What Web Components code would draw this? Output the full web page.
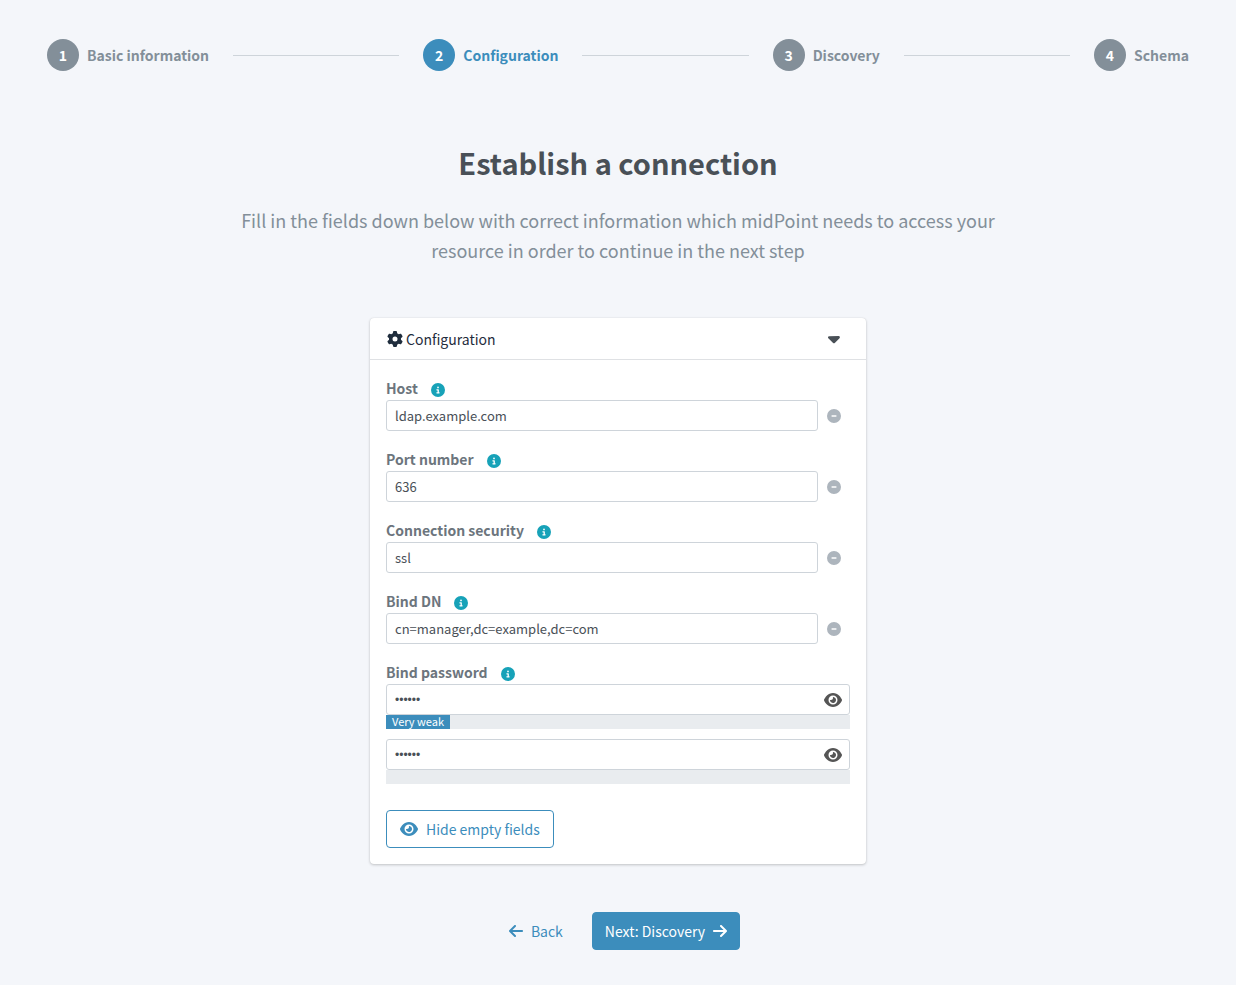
<!DOCTYPE html>
<html lang="en">
<head>
<meta charset="utf-8">
<meta name="viewport" content="width=device-width, initial-scale=1">
<title>Establish a connection</title>
<style>
  html { background: #f4f6fa; }
  body {
    margin: 0;
    font: 14px/24px "Noto Sans CJK SC", "Noto Sans CJK JP", "Noto Sans", sans-serif;
    color: #495057;
    --primary: #3c8dbc;
    --muted: #838f99;
    --line: #ced4da;
  }
</style>
</head>
<body>
<resource-wizard></resource-wizard>

<script>
const ICONS = {
  cog: ['0 0 512 512', 'M495.9 166.6c3.2 8.7 .5 18.4-6.4 24.6l-43.3 39.4c1.1 8.3 1.7 16.8 1.7 25.4s-.6 17.1-1.7 25.4l43.3 39.4c6.9 6.2 9.6 15.9 6.4 24.6c-4.4 11.9-9.7 23.3-15.8 34.3l-4.7 8.1c-6.6 11-14 21.4-22.1 31.2c-5.9 7.2-15.7 9.600-24.500 6.800l-55.700-17.700c-13.400 10.300-28.200 18.900-44 25.400l-12.500 57.100c-2 9.100-9 16.300-18.200 17.800c-13.800 2.300-28 3.500-42.500 3.500s-28.700-1.200-42.500-3.500c-9.200-1.500-16.200-8.700-18.200-17.800l-12.500-57.100c-15.800-6.500-30.600-15.100-44-25.400L83.100 425.900c-8.800 2.800-18.600 .3-24.500-6.800c-8.100-9.800-15.500-20.200-22.100-31.200l-4.700-8.100c-6.100-11-11.400-22.400-15.800-34.300c-3.200-8.700-.5-18.400 6.400-24.600l43.300-39.400C64.600 273.100 64 264.600 64 256s.6-17.100 1.700-25.400L22.400 191.200c-6.900-6.200-9.600-15.900-6.400-24.600c4.400-11.900 9.700-23.300 15.800-34.300l4.700-8.100c6.600-11 14-21.400 22.100-31.200c5.900-7.200 15.700-9.600 24.500-6.800l55.700 17.700c13.400-10.300 28.200-18.900 44-25.400l12.500-57.100c2-9.100 9-16.300 18.200-17.800C227.300 1.200 241.500 0 256 0s28.700 1.200 42.500 3.500c9.200 1.500 16.200 8.700 18.200 17.800l12.500 57.100c15.800 6.500 30.600 15.100 44 25.400l55.700-17.700c8.800-2.800 18.600-.3 24.500 6.800c8.100 9.800 15.500 20.200 22.100 31.200l4.700 8.100c6.100 11 11.400 22.400 15.800 34.300zM256 336a80 80 0 1 0 0-160 80 80 0 1 0 0 160z'],
  info: ['0 0 512 512', 'M256 512A256 256 0 1 0 256 0a256 256 0 1 0 0 512zM216 336h24V272H216c-13.300 0-24-10.700-24-24s10.700-24 24-24h48c13.300 0 24 10.700 24 24v88h8c13.300 0 24 10.700 24 24s-10.700 24-24 24H216c-13.300 0-24-10.700-24-24s10.700-24 24-24zm40-208a32 32 0 1 1 0 64 32 32 0 1 1 0-64z'],
  minus: ['0 0 512 512', 'M256 512A256 256 0 1 0 256 0a256 256 0 1 0 0 512zM184 232H328c13.300 0 24 10.700 24 24s-10.700 24-24 24H184c-13.300 0-24-10.700-24-24s10.700-24 24-24z'],
  eye: ['0 0 576 512', 'M288 32c-80.800 0-145.500 36.800-192.600 80.600C48.600 156 17.300 208 2.500 243.700c-3.300 7.900-3.300 16.700 0 24.600C17.300 304 48.600 356 95.400 399.400C142.500 443.200 207.200 480 288 480s145.500-36.800 192.600-80.600c46.800-43.500 78.100-95.400 93-131.100c3.300-7.900 3.300-16.700 0-24.600c-14.900-35.700-46.200-87.700-93-131.100C433.500 68.800 368.800 32 288 32zM144 256a144 144 0 1 1 288 0 144 144 0 1 1 -288 0zm144-64c0 35.300-28.700 64-64 64c-7.100 0-13.900-1.200-20.300-3.300c-5.500-1.800-11.900 1.600-11.700 7.400c.3 6.900 1.300 13.800 3.200 20.700c13.700 51.200 66.400 81.600 117.600 67.900s81.600-66.400 67.900-117.600c-11.100-41.500-47.800-69.400-88.600-71.100c-5.800-.2-9.200 6.100-7.400 11.700c2.100 6.400 3.300 13.200 3.300 20.300z'],
  caret: ['0 0 320 512', 'M137.4 374.6c12.5 12.5 32.800 12.5 45.300 0l128-128c9.200-9.200 11.900-22.900 6.900-34.900s-16.600-19.800-29.600-19.800L32 192c-12.900 0-24.600 7.800-29.600 19.800s-2.200 25.700 6.900 34.900l128 128z'],
  left: ['0 0 448 512', 'M9.400 233.400c-12.500 12.500-12.500 32.800 0 45.300l160 160c12.500 12.500 32.800 12.500 45.300 0s12.500-32.800 0-45.300L109.200 288 416 288c17.700 0 32-14.300 32-32s-14.300-32-32-32l-306.700 0L214.600 118.600c12.500-12.500 12.500-32.800 0-45.300s-32.800-12.500-45.300 0l-160 160z'],
  right: ['0 0 448 512', 'M438.600 278.600c12.500-12.500 12.500-32.800 0-45.300l-160-160c-12.500-12.500-32.800-12.500-45.300 0s-12.500 32.800 0 45.300L338.800 224 32 224c-17.700 0-32 14.300-32 32s14.300 32 32 32l306.700 0L233.400 393.400c-12.500 12.500-12.500 32.800 0 45.300s32.800 12.500 45.300 0l160-160z']
};

function define(name, html, setup) {
  const template = document.createElement('template');
  template.innerHTML = html;
  customElements.define(name, class extends HTMLElement {
    constructor() {
      super();
      this.attachShadow({ mode: 'open' }).append(template.content.cloneNode(true));
    }
    connectedCallback() {
      if (setup && !this.ready) { this.ready = true; setup(this, this.shadowRoot); }
    }
  });
}

/* Icon: as tall as --icon-size, as wide as its own view box asks */
define('ui-icon', `
  <style>
    :host { display: inline-flex; flex: none; }
    svg { display: block; height: var(--icon-size, 16px); fill: currentColor; }
  </style>
  <svg aria-hidden="true"><path/></svg>`, (el, root) => {
  const [box, path] = ICONS[el.getAttribute('name')];
  root.querySelector('svg').setAttribute('viewBox', box);
  root.querySelector('path').setAttribute('d', path);
});

define('wizard-step', `
  <style>
    :host { display: flex; align-items: center; gap: 8px; color: var(--muted); font-weight: 700; white-space: nowrap; }
    :host([active]) { color: var(--primary); }
    .dot { display: grid; place-items: center; width: 32px; height: 32px; border-radius: 50%; background: var(--muted); }
    :host([active]) .dot { background: var(--primary); }
    .dot span { color: #fff; }
  </style>
  <div class="dot"><span></span></div><slot></slot>`, (el, root) => {
  root.querySelector('span').textContent = el.getAttribute('number');
});

define('wizard-steps', `
  <style>
    :host { display: flex; align-items: center; gap: 24px; }
    i { flex: 1; height: 1px; background: var(--line); }
  </style>
  <wizard-step number="1">Basic information</wizard-step><i></i>
  <wizard-step number="2" active>Configuration</wizard-step><i></i>
  <wizard-step number="3">Discovery</wizard-step><i></i>
  <wizard-step number="4">Schema</wizard-step>`);

const FIELD_CSS = `
  :host { display: block; }
  .head { display: flex; align-items: center; gap: 13px; }
  label { font-weight: 700; color: #6c757d; }
  .info { color: #17a2b8; --icon-size: 14px; padding-top: 4px; }
  input {
    box-sizing: border-box; display: block; width: 100%; height: 31px; margin: 0; padding: 4px 8px;
    border: 1px solid var(--line); border-radius: 3px; background: #fff;
    font: inherit; font-size: 13px; line-height: 21px; color: #495057; outline: none;
  }
  button { display: flex; padding: 0; border: 0; background: none; cursor: pointer; }`;

define('text-field', `
  <style>${FIELD_CSS}
    .row { display: flex; align-items: center; gap: 9px; padding-right: 9px; }
    button { color: #adb5bd; --icon-size: 14px; }
  </style>
  <div class="head"><label for="field"></label><ui-icon class="info" name="info"></ui-icon></div>
  <div class="row"><input id="field" type="text"><button type="button" aria-label="Remove value"><ui-icon name="minus"></ui-icon></button></div>`,
(el, root) => {
  root.querySelector('label').textContent = el.getAttribute('label');
  root.querySelector('input').value = el.getAttribute('value');
});

define('password-field', `
  <style>${FIELD_CSS}
    input { font-family: "Liberation Sans", sans-serif; font-size: 12px; }
    .entry + .entry { margin-top: 10px; }
    .box { position: relative; }
    .box button { position: absolute; right: 8px; top: 0; height: 100%; align-items: center; color: #555; }
    .meter { height: 14px; background: #e9ecef; font-size: 11px; line-height: 13px; }
    .meter span { display: inline-block; height: 14px; padding: 0 6px; color: #fff; background: var(--primary); vertical-align: top; }
  </style>
  <div class="head"><label for="first"></label><ui-icon class="info" name="info"></ui-icon></div>
  <div class="entry">
    <div class="box"><input id="first" type="password"><button type="button" aria-label="Show password"><ui-icon name="eye"></ui-icon></button></div>
    <div class="meter"><span>Very weak</span></div>
  </div>
  <div class="entry">
    <div class="box"><input type="password" aria-label="Repeat password"><button type="button" aria-label="Show password"><ui-icon name="eye"></ui-icon></button></div>
    <div class="meter"></div>
  </div>`, (el, root) => {
  root.querySelector('label').textContent = el.getAttribute('label');
  root.querySelectorAll('input').forEach(input => { input.value = 'secret'; });
});

define('ui-button', `
  <style>
    :host { display: inline-flex; }
    button {
      display: flex; align-items: center; gap: 8px; padding: 6px 12px;
      border: 1px solid transparent; border-radius: 4px; background: none;
      font: inherit; color: var(--primary); cursor: pointer; white-space: nowrap;
    }
    :host([kind=outline]) button { padding: 6px 13px; border-color: var(--primary); background: #fff; }
    :host([kind=solid]) button { border-color: var(--primary); background: var(--primary); color: #fff; }
  </style>
  <button type="button"><slot></slot></button>`);

define('config-card', `
  <style>
    :host {
      display: block; width: 100%; max-width: 496px; background: #fff; border-radius: 4px;
      box-shadow: 0 0 1px rgba(0,0,0,.125), 0 1px 3px rgba(0,0,0,.2);
    }
    button {
      box-sizing: border-box; display: flex; align-items: center; gap: 3px; width: 100%; height: 42px; padding: 0 26px 0 17px;
      border: 0; border-bottom: 1px solid #dfe1e4; background: none;
      font: inherit; color: #1f2d3d; cursor: pointer;
    }
    .caret { margin-left: auto; color: #495057; --icon-size: 19px; }
    .body { display: grid; gap: 16px; padding: 16px; }
    ui-button { margin-top: 10px; justify-self: start; }
  </style>
  <button type="button" aria-expanded="true"><ui-icon name="cog"></ui-icon><slot name="title"></slot><ui-icon class="caret" name="caret"></ui-icon></button>
  <div class="body">
    <text-field label="Host" value="ldap.example.com"></text-field>
    <text-field label="Port number" value="636"></text-field>
    <text-field label="Connection security" value="ssl"></text-field>
    <text-field label="Bind DN" value="cn=manager,dc=example,dc=com"></text-field>
    <password-field label="Bind password"></password-field>
    <ui-button kind="outline"><ui-icon name="eye"></ui-icon>Hide empty fields</ui-button>
  </div>`);

define('resource-wizard', `
  <style>
    :host { display: block; padding: 39px 47px 35px; }
    main { display: flex; flex-direction: column; align-items: center; }
    h1 { margin: 71px 0 0; font-size: 29px; line-height: 40px; font-weight: 700; text-align: center; }
    p { margin: 23px 0 53px; max-width: 760px; font-size: 18px; line-height: 30px; color: var(--muted); text-align: center; }
    nav { display: flex; gap: 16px; margin-top: 48px; }
  </style>
  <wizard-steps></wizard-steps>
  <main>
    <h1>Establish a connection</h1>
    <p>Fill in the fields down below with correct information which midPoint needs to access your resource in order to continue in the next step</p>
    <config-card><span slot="title">Configuration</span></config-card>
    <nav>
      <ui-button><ui-icon name="left"></ui-icon>Back</ui-button>
      <ui-button kind="solid">Next: Discovery<ui-icon name="right"></ui-icon></ui-button>
    </nav>
  </main>`);
</script>
</body>
</html>
